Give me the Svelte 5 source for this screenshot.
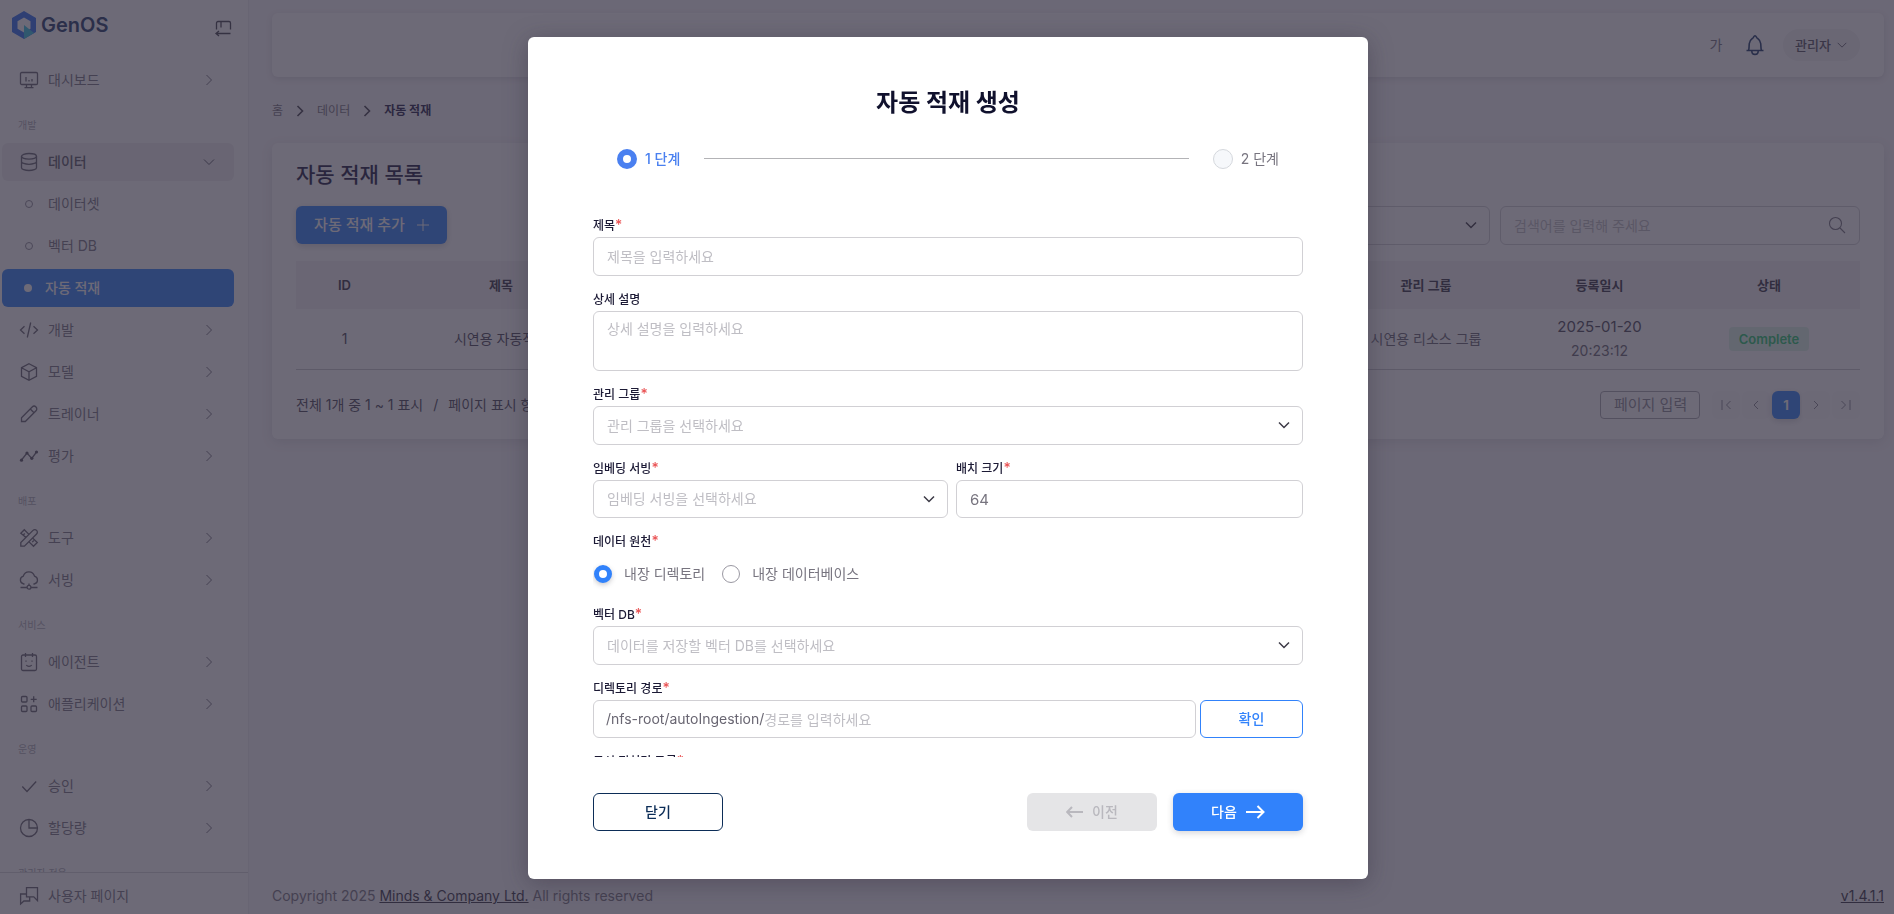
<script>
  const sections = [
    { label: '', items: [{ icon: 'dashboard', name: '대시보드' }] },
    {
      label: '개발',
      items: [
        { icon: 'database', name: '데이터', open: true, children: ['데이터셋', '벡터 DB', '자동 적재'] },
        { icon: 'code', name: '개발' },
        { icon: 'box', name: '모델' },
        { icon: 'pencil', name: '트레이너' },
        { icon: 'trend', name: '평가' }
      ]
    },
    {
      label: '배포',
      items: [
        { icon: 'tools', name: '도구' },
        { icon: 'cloud', name: '서빙' }
      ]
    },
    {
      label: '서비스',
      items: [
        { icon: 'agent', name: '에이전트' },
        { icon: 'apps', name: '애플리케이션' }
      ]
    },
    {
      label: '운영',
      items: [
        { icon: 'check', name: '승인' },
        { icon: 'pie', name: '할당량' }
      ]
    },
    { label: '관리자 전용', items: [] }
  ];

  const activeChild = '자동 적재';

  let title = $state('');
  let description = $state('');
  let batchSize = $state(64);
  let source = $state('directory');
  let path = $state('');
</script>

{#snippet icon(name)}
  <svg class="icon" viewBox="0 0 20 20" width="20" height="20" aria-hidden="true">
    {#if name === 'dashboard'}
      <rect x="1.5" y="2.5" width="17" height="12" rx="1.2" />
      <path d="M7 7v4.500M10 10v1.500M13 9v2.500M7.500 14.500v3M12.500 14.500v3M5.500 17.700h9" />
    {:else if name === 'database'}
      <ellipse cx="10" cy="4.300" rx="7.500" ry="2.800" />
      <path d="M2.500 4.300v11.400c0 1.500 3.400 2.800 7.500 2.800s7.500-1.300 7.500-2.800V4.300M2.500 9.500c0 1.500 3.400 2.800 7.500 2.800s7.500-1.300 7.500-2.800" />
    {:else if name === 'code'}
      <path d="M5.500 6.200L1.500 10l4 3.800M14.500 6.200l4 3.800-4 3.800M11.700 2.500L8.300 17.500" />
    {:else if name === 'box'}
      <path d="M10 1.700l7.500 4v8.600l-7.500 4-7.500-4V5.700zM2.500 5.700L10 9.800l7.500-4.100M10 9.800v8.500" />
    {:else if name === 'pencil'}
      <path d="M2.500 17.500v-3.800L13.200 3a2.600 2.600 0 0 1 3.800 3.800L6.300 17.500zM11.300 5l3.700 3.700" />
    {:else if name === 'trend'}
      <path d="M2.500 14l5.500-7 4.800 5.500L17.500 6" />
      <g class="dots"><circle cx="2.500" cy="14.200" r="1.600" /><circle cx="8" cy="7" r="1.600" /><circle cx="12.800" cy="12.300" r="1.600" /><circle cx="17.500" cy="6" r="1.600" /></g>
    {:else if name === 'tools'}
      <path d="M1.800 18.200v-3.600L14 2.400a2.500 2.500 0 0 1 3.600 3.600L5.400 18.200zM7 9.500L1.800 5.200l3.500-3.500 4.900 4.900M5.800 5.500L4.500 6.800M13.300 9.800l5 4.700-3.800 3.800-5-4.900M14.800 12.500l-1.600 1.600" />
    {:else if name === 'cloud'}
      <path d="M5.500 14H4.800a4 4 0 0 1-.5-7.800 5.800 5.800 0 0 1 11.200 0A4 4 0 0 1 15.200 14h-.8M1.500 17.500H8M12 17.500h6.500M10 13.500v2" />
      <circle cx="10" cy="17.300" r="1.900" />
    {:else if name === 'agent'}
      <rect x="2.500" y="3" width="15" height="15.500" rx="1.500" />
      <path d="M6.500 1v4M13.500 1v4M7 8.500v1.200M13 8.500v1.200M7.300 13c1.200 1.700 4.200 1.700 5.400 0" />
    {:else if name === 'apps'}
      <rect x="2.500" y="2.500" width="5.500" height="5.500" rx="1" />
      <rect x="2.500" y="12" width="5.500" height="5.500" rx="1" />
      <rect x="12" y="12" width="5.500" height="5.500" rx="1" />
      <path d="M14.700 2.300v6M11.700 5.300h6" />
    {:else if name === 'check'}
      <path d="M3.300 10.500l4.700 5 9.200-10" />
    {:else if name === 'pie'}
      <circle cx="10" cy="10" r="8.500" />
      <path d="M10 1.500V10h8.500" />
    {:else if name === 'chat'}
      <path d="M7.500 1.700h11v13l-3.700-3.900H7.500zM7.500 8H1.600v10l3.300-3h5.800v-4" />
    {/if}
  </svg>
{/snippet}

{#snippet chevron(dir)}
  <svg class="chevron {dir}" viewBox="0 0 14 14" width="14" height="14" aria-hidden="true">
    <path d="M2 4.500l5 5 5-5" />
  </svg>
{/snippet}

<div class="page">
  <aside>
    <div class="brand">
      <a class="logo" href="#home">
        <svg viewBox="0 0 24 28" width="24" height="28" aria-hidden="true">
          <path fill="#2f6ff0" fill-rule="evenodd" d="M12 0l12 7v14l-12 7L0 21V7zM12 6.500L5.500 10.300v7.400L12 21.500l6.500-3.800v-7.400z" />
          <path fill="#35c4e0" d="M12 14l10 8-10 6z" />
        </svg>
        <span>GenOS</span>
      </a>
      <button class="fold" aria-label="메뉴 접기">
        <svg viewBox="0 0 18 18" width="18" height="18">
          <path d="M2.500 9.500V3a1.500 1.500 0 0 1 1.500-1.500h11A1.500 1.500 0 0 1 16.500 3v6.500M7 1.500v6M16.500 13.500h-14M5 11l-3 2.500L5 16" />
        </svg>
      </button>
    </div>
    <nav>
      {#each sections as section}
        {#if section.label}<h2>{section.label}</h2>{/if}
        {#each section.items as item}
          <a class="item" class:open={item.open} href="#menu">
            {@render icon(item.icon)}
            <span>{item.name}</span>
            {@render chevron(item.open ? 'down' : 'right')}
          </a>
          {#each item.children ?? [] as child}
            <a class="item child" class:active={child === activeChild} href="#menu">
              <i></i><span>{child}</span>
            </a>
          {/each}
        {/each}
      {/each}
    </nav>
    <a class="user-page" href="#user">{@render icon('chat')}<span>사용자 페이지</span></a>
  </aside>

  <main>
    <header class="topbar">
      <button class="lang">가</button>
      <button class="bell" aria-label="알림">
        <svg viewBox="0 0 20 22" width="20" height="22">
          <path d="M1.500 16.500h17M3.500 16.500c.8-1.500.4-4 .8-7C4.700 6 6.800 5 8 4c.7-.6.800-2.300 2-2.300S11.300 3.400 12 4c1.200 1 3.300 2 3.700 5.500.4 3 0 5.500.8 7M6.800 17c0 4.500 6.400 4.500 6.400 0" />
        </svg>
      </button>
      <button class="account">관리자 {@render chevron('down')}</button>
    </header>

    <div class="crumbs">
      <a href="#home">홈</a>
      {@render chevron('right')}
      <a href="#data">데이터</a>
      {@render chevron('right')}
      <strong>자동 적재</strong>
    </div>

    <section class="card">
      <h1>자동 적재 목록</h1>
      <div class="toolbar">
        <button class="add">
          자동 적재 추가
          <svg viewBox="0 0 12 12" width="12" height="12" aria-hidden="true"><path d="M6 0v12M0 6h12" /></svg>
        </button>
        <div class="filters">
          <div class="select">
            <select aria-label="검색 조건"><option>전체</option></select>
            {@render chevron('down')}
          </div>
          <div class="search">
            <input type="text" placeholder="검색어를 입력해 주세요" aria-label="검색어" />
            <svg viewBox="0 0 18 18" width="18" height="18" aria-hidden="true"><circle cx="7.500" cy="7.500" r="6" /><path d="M12 12l5 5" /></svg>
          </div>
        </div>
      </div>

      <table>
        <thead>
          <tr>
            <th class="c-id">ID</th>
            <th class="c-title">제목</th>
            <th>데이터 원천</th>
            <th class="c-group">관리 그룹</th>
            <th class="c-date">등록일시</th>
            <th class="c-state">상태</th>
          </tr>
        </thead>
        <tbody>
          <tr>
            <td>1</td>
            <td>시연용 자동적재</td>
            <td>내장 디렉토리</td>
            <td class="muted">시연용 리소스 그룹</td>
            <td class="date">2025-01-20<small>20:23:12</small></td>
            <td><span class="badge">Complete</span></td>
          </tr>
        </tbody>
      </table>

      <div class="pager">
        <p>전체 1개 중 1 ~ 1 표시<span>/</span>페이지 표시 항목 수</p>
        <input class="page-no" type="text" placeholder="페이지 입력" aria-label="페이지 입력" />
        <div class="pages">
          <button aria-label="처음"><svg viewBox="0 0 14 14" width="14" height="14"><path d="M3 2v10M11.500 3L7.500 7l4 4" /></svg></button>
          <button aria-label="이전 쪽"><svg viewBox="0 0 14 14" width="14" height="14"><path d="M9 3L5 7l4 4" /></svg></button>
          <button class="current">1</button>
          <button aria-label="다음 쪽"><svg viewBox="0 0 14 14" width="14" height="14"><path d="M5 3l4 4-4 4" /></svg></button>
          <button aria-label="마지막"><svg viewBox="0 0 14 14" width="14" height="14"><path d="M11 2v10M2.500 3l4 4-4 4" /></svg></button>
        </div>
      </div>
    </section>

    <footer>
      <span>Copyright 2025 <a href="#company">Minds &amp; Company Ltd.</a> All rights reserved</span>
      <a href="#version">v1.4.1.1</a>
    </footer>
  </main>
</div>

<div class="overlay">
  <div class="modal" role="dialog" aria-modal="true" aria-labelledby="modal-title">
    <h2 id="modal-title">자동 적재 생성</h2>

    <ol class="steps">
      <li class="on"><i></i>1 단계</li>
      <li class="bar"></li>
      <li><i></i>2 단계</li>
    </ol>

    <form>
      <div class="field">
        <label for="f-title">제목<em>*</em></label>
        <input id="f-title" type="text" placeholder="제목을 입력하세요" bind:value={title} />
      </div>
      <div class="field">
        <label for="f-desc">상세 설명</label>
        <textarea id="f-desc" placeholder="상세 설명을 입력하세요" bind:value={description}></textarea>
      </div>
      <div class="field">
        <label for="f-group">관리 그룹<em>*</em></label>
        <div class="select">
          <select id="f-group"><option>관리 그룹을 선택하세요</option></select>
          {@render chevron('down')}
        </div>
      </div>
      <div class="pair">
        <div class="field half">
          <label for="f-serving">임베딩 서빙<em>*</em></label>
          <div class="select">
            <select id="f-serving" class="short"><option>임베딩 서빙을 선택하세요</option></select>
            {@render chevron('down')}
          </div>
        </div>
        <div class="field">
          <label for="f-batch">배치 크기<em>*</em></label>
          <input id="f-batch" class="short number" type="text" bind:value={batchSize} />
        </div>
      </div>
      <fieldset>
        <legend>데이터 원천<em>*</em></legend>
        <div class="radios">
          <label><input type="radio" value="directory" bind:group={source} />내장 디렉토리</label>
          <label><input type="radio" value="database" bind:group={source} />내장 데이터베이스</label>
        </div>
      </fieldset>
      <div class="field">
        <label for="f-vector">벡터 DB<em>*</em></label>
        <div class="select">
          <select id="f-vector"><option>데이터를 저장할 벡터 DB를 선택하세요</option></select>
          {@render chevron('down')}
        </div>
      </div>
      <div class="field">
        <label for="f-path">디렉토리 경로<em>*</em></label>
        <div class="path">
          <div class="path-box">
            <span>/nfs-root/autoIngestion/</span>
            <input id="f-path" type="text" placeholder="경로를 입력하세요" bind:value={path} />
          </div>
          <button type="button" class="confirm">확인</button>
        </div>
      </div>
      <div class="field">
        <label for="f-pre">문서 전처리 그룹<em>*</em></label>
        <div class="select">
          <select id="f-pre"><option>그룹을 선택하세요</option></select>
          {@render chevron('down')}
        </div>
      </div>
    </form>

    <div class="actions">
      <button class="close">닫기</button>
      <button class="prev" disabled>
        <svg viewBox="0 0 18 12" width="18" height="12" aria-hidden="true"><path d="M17 6H1.500M6 1L1.200 6 6 11" /></svg>
        이전
      </button>
      <button class="next">
        다음
        <svg viewBox="0 0 20 14" width="20" height="14" aria-hidden="true"><path d="M1 7h17M12.500 1l6 6-6 6" /></svg>
      </button>
    </div>
  </div>
</div>

<style>
  :global(body) {
    background: #f8f7fa;
    color: #4b4858;
    font: 14px/20px Inter, 'Noto Sans CJK KR', sans-serif;
  }

  :global(*) {
    box-sizing: border-box;
  }

  button,
  input,
  select,
  textarea {
    font: inherit;
    color: inherit;
  }

  button {
    display: flex;
    align-items: center;
    justify-content: center;
    border: 0;
    padding: 0;
    background: none;
  }

  a {
    color: inherit;
    text-decoration: none;
  }

  svg {
    flex: none;
    fill: none;
    stroke: currentColor;
  }

  h1,
  h2,
  p,
  ol,
  fieldset {
    margin: 0;
    padding: 0;
  }

  .page {
    display: flex;
    height: 100vh;
    overflow: hidden;
  }

  /* sidebar */
  aside {
    display: flex;
    flex-direction: column;
    flex: none;
    width: 249px;
    background: #fff;
    border-right: 1px solid #eeedf0;
    color: #787582;
  }

  .brand {
    display: flex;
    justify-content: space-between;
    padding: 11px 16px 0 12px;
    height: 61px;
  }

  .logo {
    display: flex;
    align-items: center;
    gap: 5px;
    height: 28px;
    color: #243a68;
    font-size: 20px;
    font-weight: 600;
  }

  .logo svg {
    stroke: none;
  }

  .fold {
    height: 36px;
    color: #45434f;
  }

  .fold svg {
    stroke-width: 1.3;
  }

  nav {
    flex: 1;
    min-height: 0;
    overflow: hidden;
    padding: 0 14px 0 2px;
  }

  nav h2 {
    height: 40px;
    padding: 12px 16px 0;
    color: #aeacb4;
    font-size: 10px;
    font-weight: 400;
  }

  .item {
    display: flex;
    align-items: center;
    gap: 9px;
    height: 38px;
    margin-bottom: 4px;
    padding: 0 18px 0 17px;
    border-radius: 6px;
  }

  .item span {
    flex: 1;
  }

  .icon {
    stroke: #66636f;
    stroke-width: 1.3;
  }

  .icon .dots {
    fill: #55525f;
    stroke: none;
  }

  .open {
    background: #f0eff1;
    color: #5b5866;
    font-weight: 500;
  }

  .child i {
    width: 8px;
    height: 8px;
    margin: 0 6px;
    border: 1px solid #8f8d97;
    border-radius: 50%;
  }

  .child.active {
    gap: 7px;
    background: #3182fb;
    color: #fff;
    font-weight: 500;
  }

  .child.active i {
    margin-left: 5px;
    border: 0;
    background: #fff;
  }

  .chevron {
    stroke-width: 1;
  }

  .chevron.right {
    transform: rotate(-90deg);
  }

  .user-page {
    display: flex;
    align-items: center;
    gap: 9px;
    height: 42px;
    padding: 4px 19px 0;
    border-top: 1px solid #d6d5d9;
  }

  /* content */
  main {
    display: flex;
    flex: 1;
    flex-direction: column;
    min-width: 0;
    padding: 13px 10px 8px 23px;
  }

  .topbar {
    display: flex;
    align-items: center;
    justify-content: flex-end;
    height: 64px;
    padding: 0 24px;
    border-radius: 6px;
    background: #fff;
    box-shadow: 0 2px 6px rgba(47, 43, 61, 0.14);
  }

  .lang {
    width: 24px;
    color: #77747f;
  }

  .bell {
    margin: 0 18px 0 17px;
    color: #1b3868;
  }

  .bell svg {
    stroke-width: 1.6;
  }

  .account {
    gap: 5px;
    width: 77px;
    height: 32px;
    border-radius: 16px;
    background: #f4f3f5;
    color: #55525f;
    font-size: 13px;
    font-weight: 500;
  }

  .account .chevron {
    width: 12px;
  }

  .crumbs {
    display: flex;
    align-items: center;
    gap: 10px;
    height: 66px;
    padding-top: 2px;
    color: #77747f;
    font-size: 12px;
  }

  .crumbs strong {
    color: #232046;
  }

  .crumbs .chevron {
    stroke: #45434f;
    stroke-width: 1.6;
  }

  .card {
    padding: 16px 24px 20px;
    border-radius: 6px;
    background: #fff;
    box-shadow: 0 3px 12px rgba(47, 43, 61, 0.12);
  }

  .card h1 {
    height: 47px;
    color: #1d1a40;
    font-size: 21px;
    font-weight: 500;
    line-height: 32px;
  }

  .toolbar,
  .filters {
    display: flex;
    justify-content: space-between;
    gap: 10px;
  }

  .toolbar {
    margin-bottom: 16px;
  }

  .add {
    gap: 12px;
    width: 151px;
    height: 38px;
    border-radius: 6px;
    background: #3182fb;
    box-shadow: 0 2px 6px rgba(47, 43, 61, 0.2);
    color: #fff;
    font-size: 15px;
    font-weight: 500;
  }

  .select,
  .search {
    position: relative;
  }

  .filters .select {
    width: 200px;
  }

  .search {
    width: 360px;
  }

  .search svg {
    position: absolute;
    top: 10px;
    right: 14px;
    stroke: #77747f;
    stroke-width: 1.1;
  }

  .select .chevron {
    position: absolute;
    top: 12px;
    right: 12px;
    stroke: #3c3a46;
    stroke-width: 1.5;
    pointer-events: none;
  }

  input[type='text'],
  textarea,
  select {
    display: block;
    width: 100%;
    height: 39px;
    padding: 0 13px;
    border: 1px solid #d1d0d4;
    border-radius: 6px;
    background: #fff;
    color: #77747f;
    appearance: none;
  }

  select,
  ::placeholder {
    color: #bfbec4;
  }

  table {
    width: 100%;
    border-collapse: collapse;
    table-layout: fixed;
    text-align: center;
  }

  th {
    height: 48px;
    background: #f3f2f4;
    color: #373445;
    font-size: 13px;
    font-weight: 600;
  }

  td {
    height: 60px;
    padding: 0;
    border-bottom: 1px solid #c9c8cd;
  }

  .c-id { width: 97px; }
  .c-title { width: 216px; }
  .c-group { width: 190px; }
  .c-date { width: 157px; }
  .c-state { width: 182px; }

  .muted {
    color: #696672;
  }

  .date {
    font-size: 15px;
    line-height: 24px;
  }

  .date small {
    display: block;
    color: #696672;
    font-size: 14px;
  }

  .badge {
    display: inline-block;
    width: 80px;
    border-radius: 4px;
    background: #ddf6e8;
    color: #28c76f;
    font-size: 13px;
    font-weight: 600;
    line-height: 24px;
  }

  .pager {
    display: flex;
    align-items: center;
    padding-top: 21px;
  }

  .pager p {
    flex: 1;
  }

  .pager span {
    margin: 0 10px;
  }

  input.page-no {
    width: 100px;
    height: 28px;
    margin-right: 12px;
    border-color: #a9a7b0;
    border-radius: 4px;
    font-size: 15px;
  }

  .page-no::placeholder {
    color: #8b8994;
  }

  .pages {
    display: flex;
    gap: 2px;
  }

  .pages button {
    width: 28px;
    height: 28px;
    border-radius: 6px;
    background: #fbfafc;
    color: #8b8994;
  }

  .pages .current {
    background: #3182fb;
    box-shadow: 0 2px 6px rgba(47, 43, 61, 0.2);
    color: #fff;
    font-size: 13px;
    font-weight: 700;
  }

  footer {
    display: flex;
    justify-content: space-between;
    margin-top: auto;
    color: #77747f;
    font-size: 14px;
  }

  footer a {
    color: #373445;
    text-decoration: underline;
  }

  /* modal */
  .overlay {
    position: fixed;
    inset: 0;
    display: flex;
    align-items: center;
    justify-content: center;
    padding: 2px 0 0 2px;
    background: rgba(47, 43, 61, 0.7);
  }

  .modal {
    display: flex;
    flex-direction: column;
    width: 840px;
    max-width: 100%;
    height: calc(100vh - 72px);
    padding: 48px 65px;
    border-radius: 6px;
    background: #fff;
    box-shadow: 0 4px 24px rgba(47, 43, 61, 0.4);
  }

  .modal h2 {
    color: #10112d;
    font-size: 24px;
    font-weight: 700;
    line-height: 36px;
    text-align: center;
  }

  .steps {
    display: flex;
    align-items: center;
    gap: 24px;
    margin: 28px 24px 48px;
    list-style: none;
    color: #77747f;
  }

  .steps li {
    display: flex;
    align-items: center;
    gap: 8px;
  }

  .steps i {
    width: 20px;
    height: 20px;
    border: 1px solid #d5d8dd;
    border-radius: 50%;
    background: #f6f8fb;
  }

  .steps .on {
    color: #4a80f0;
    font-weight: 500;
  }

  .steps .on i {
    border: 6px solid #4a80f0;
    background: #fff;
  }

  .steps .bar {
    flex: 1;
    height: 2px;
    border-top: 1px solid #b3b3b6;
  }

  form {
    flex: 1;
    min-height: 0;
    overflow: hidden;
  }

  .field,
  .pair {
    margin-bottom: 15px;
  }

  .field > label,
  legend {
    display: block;
    margin-bottom: 2px;
    padding: 0;
    color: #1c1a35;
    font-size: 12px;
    font-weight: 500;
    line-height: 18px;
  }

  em {
    color: #ea5455;
    font-size: 14px;
    font-style: normal;
    line-height: 1;
  }

  .field textarea {
    height: 60px;
    padding-top: 7px;
    resize: none;
  }

  .pair {
    display: flex;
    gap: 8px;
  }

  .pair .field {
    flex: 1;
    margin-bottom: 0;
  }

  .pair .half {
    flex: none;
    width: 50%;
  }

  select.short,
  input.short {
    height: 38px;
  }

  input.number {
    font-size: 15px;
  }

  fieldset {
    border: 0;
  }

  .radios {
    display: flex;
    gap: 16px;
    height: 53px;
    padding-top: 10px;
    color: #77747f;
  }

  .radios label {
    display: flex;
    align-items: center;
    gap: 12px;
    height: 22px;
  }

  .radios input {
    width: 18px;
    height: 18px;
    margin: 0 0 0 1px;
    border: 1px solid #9a98a2;
    border-radius: 50%;
    background: #fff;
    appearance: none;
  }

  .radios input:checked {
    border: 5px solid #3182fb;
    box-shadow: 0 2px 5px rgba(47, 43, 61, 0.25);
  }

  .path {
    display: flex;
    gap: 4px;
  }

  .path-box {
    display: flex;
    flex: 1;
    align-items: center;
    height: 38px;
    padding-left: 12px;
    border: 1px solid #d1d0d4;
    border-radius: 6px;
    color: #696672;
  }

  .path-box input {
    flex: 1;
    height: 36px;
    padding: 0;
    border: 0;
    background: none;
  }

  .confirm {
    width: 103px;
    border: 1px solid #3182fb;
    border-radius: 6px;
    color: #3182fb;
    font-weight: 500;
  }

  .actions {
    display: flex;
    gap: 16px;
    padding-top: 36px;
  }

  .actions button {
    gap: 8px;
    width: 130px;
    height: 38px;
    border-radius: 6px;
    font-weight: 500;
  }

  .actions svg {
    stroke-width: 2;
  }

  .actions .close {
    margin-right: auto;
    border: 1px solid #0c2d57;
    color: #0c2d57;
  }

  .actions .prev {
    background: #e5e5e7;
    color: #b9b8be;
  }

  .actions .next {
    background: #3182fb;
    box-shadow: 0 2px 6px rgba(47, 43, 61, 0.2);
    color: #fff;
  }
</style>
